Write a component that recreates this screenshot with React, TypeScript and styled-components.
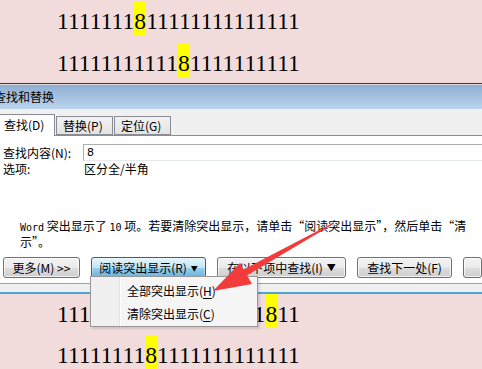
import React from 'react';
import styled, { createGlobalStyle } from 'styled-components';

const Global = createGlobalStyle`
  html, body { margin: 0; padding: 0; }
  body { width: 482px; height: 369px; overflow: hidden; background: #f2dcdb; }
`;

const Screen = styled.div`
  position: relative;
  width: 482px;
  height: 369px;
  overflow: hidden;
  display: flex;
  flex-direction: column;
  background: #f2dcdb;
`;

const DocArea = styled.div<{ $top: number; $gap: number; $height: number }>`
  flex: none;
  height: ${(p) => p.$height}px;
  box-sizing: border-box;
  padding: ${(p) => p.$top}px 0 0 57px;
  display: flex;
  flex-direction: column;
  gap: ${(p) => p.$gap}px;
  background: #f2dcdb;
`;

const DocLine = styled.div`
  display: flex;
  height: 34px;
  font-family: "Liberation Serif", "Times New Roman", serif;
  font-size: 23.6px;
  color: #000;
`;

const Digits = styled.span<{ $mark?: boolean }>`
  display: inline-block;
  height: 34px;
  line-height: 41px;
  white-space: pre;
  background: ${(p) => (p.$mark ? '#ffff00' : 'transparent')};
`;

const Divider = styled.div`
  flex: none;
  height: 1px;
  background: #3a3a3a;
  border-bottom: 1px solid #d9dde3;
`;

const Dialog = styled.div`
  flex: none;
  display: flex;
  flex-direction: column;
  font-family: "Noto Sans CJK SC", "Noto Sans", sans-serif;
  font-size: 12px;
  color: #000;
`;

const TitleBar = styled.div`
  height: 24px;
  display: flex;
  align-items: center;
  background: linear-gradient(#8fafd2, #bad4ee);
  overflow: hidden;
`;

const TitleText = styled.span`
  margin-left: -6px;
  line-height: 14px;
`;

const TabStrip = styled.div`
  height: 27px;
  box-sizing: border-box;
  display: flex;
  align-items: flex-end;
  background: #f0f0f0;
  box-shadow: inset 0 -1px #898c95;
`;

const Tab = styled.div<{ $active?: boolean; $width: number }>`
  box-sizing: border-box;
  width: ${(p) => p.$width}px;
  height: ${(p) => (p.$active ? 22 : 19)}px;
  margin-left: ${(p) => (p.$active ? -1 : 1)}px;
  margin-bottom: ${(p) => (p.$active ? 0 : 1)}px;
  border: 1px solid #898c95;
  border-bottom: ${(p) => (p.$active ? 'none' : '1px solid #898c95')};
  background: ${(p) => (p.$active ? '#ffffff' : 'linear-gradient(#f2f2f2, #e3e3e3)')};
  display: flex;
  align-items: center;
  padding-left: ${(p) => (p.$active ? 4 : 6)}px;
  padding-bottom: ${(p) => (p.$active ? 2 : 0)}px;
  line-height: 14px;
  white-space: nowrap;
`;

const Panel = styled.div`
  height: 147px;
  box-sizing: border-box;
  background: #ffffff;
  padding: 8px 0 0 3px;
  display: flex;
  flex-direction: column;
  white-space: nowrap;
  overflow: hidden;
`;

const FieldRow = styled.div`
  display: flex;
  align-items: center;
  height: 17px;
`;

const OptionRow = styled.div`
  display: flex;
  align-items: center;
  height: 14px;
  margin-top: 1px;
`;

const Label = styled.span`
  width: 80px;
  flex: none;
  line-height: 14px;
`;

const Value = styled.span`
  line-height: 14px;
  padding-left: 1px;
`;

const Input = styled.div`
  flex: none;
  width: 420px;
  height: 17px;
  box-sizing: border-box;
  border: 1px solid #abadb3;
  border-right: none;
  border-bottom-color: #e3e9ef;
  padding-left: 3px;
  display: flex;
  align-items: center;
  font-family: "DejaVu Sans", sans-serif;
  font-size: 11px;
`;

const Message = styled.div`
  margin: 43px 0 0 17px;
  line-height: 14px;
  display: flex;
  flex-direction: column;
`;

const Latin = styled.span`
  font-family: "DejaVu Sans Mono", monospace;
  font-size: 10px;
`;

const ButtonRow = styled.div`
  margin-top: 8px;
  display: flex;
  gap: 11px;
`;

const Button = styled.div<{ $width: number; $pressed?: boolean }>`
  flex: none;
  width: ${(p) => p.$width}px;
  height: 21px;
  box-sizing: border-box;
  border: 1px solid ${(p) => (p.$pressed ? '#2c628b' : '#707070')};
  border-radius: 3px;
  background: ${(p) =>
    p.$pressed
      ? 'linear-gradient(#e5f4fc 0%, #c4e5f6 50%, #98d1ef 51%, #68b3db 100%)'
      : 'linear-gradient(#f2f2f2 0%, #ebebeb 50%, #dddddd 51%, #cfcfcf 100%)'};
  box-shadow: inset 0 0 0 1px ${(p) => (p.$pressed ? 'rgba(255,255,255,0.3)' : 'rgba(255,255,255,0.7)')};
  display: flex;
  align-items: center;
  justify-content: center;
  gap: 4px;
  line-height: 14px;
  white-space: nowrap;
  overflow: hidden;
`;

const Caret = styled.span<{ $small?: boolean }>`
  font-size: ${(p) => (p.$small ? 7 : 9)}px;
  line-height: 10px;
`;

const PanelEdge = styled.div`
  height: 1px;
  background: #a0a0a0;
`;

const Footer = styled.div`
  height: 8px;
  background: #f0f0f0;
  border-bottom: 2px solid #4fa3d6;
`;

const Menu = styled.div`
  position: absolute;
  left: 90px;
  top: 276px;
  width: 168px;
  height: 51px;
  box-sizing: border-box;
  border: 1px solid #979797;
  background: #f5f5f5;
  box-shadow: 2px 2px 2px rgba(0, 0, 0, 0.12);
  display: flex;
  font-family: "Noto Sans CJK SC", "Noto Sans", sans-serif;
  font-size: 12px;
  color: #000;
`;

const Gutter = styled.div`
  width: 28px;
  flex: none;
  background: #f0f0f0;
  border-right: 1px solid #e2e3e3;
  box-shadow: 1px 0 #ffffff;
`;

const MenuItems = styled.div`
  flex: 1;
  padding: 2px 0 0 7px;
  display: flex;
  flex-direction: column;
`;

const MenuItem = styled.div`
  height: 23px;
  display: flex;
  align-items: center;
  line-height: 14px;
  white-space: nowrap;
`;

const Key = styled.span`
  text-decoration: underline;
  text-underline-offset: 2px;
`;

const Arrow = styled.svg`
  position: absolute;
  left: 0;
  top: 0;
  pointer-events: none;
`;

function Line({ before, after }: { before: number; after: number }) {
  return (
    <DocLine>
      <Digits>{'1'.repeat(before)}</Digits>
      <Digits $mark>8</Digits>
      <Digits>{'1'.repeat(after)}</Digits>
    </DocLine>
  );
}

export default function App() {
  return (
    <>
      <Global />
      <Screen>
        <DocArea $top={1} $gap={8} $height={83}>
          <Line before={7} after={14} />
          <Line before={11} after={10} />
        </DocArea>
        <Divider />
        <Dialog>
          <TitleBar>
            <TitleText>查找和替换</TitleText>
          </TitleBar>
          <TabStrip>
            <Tab $active $width={56}>查找(D)</Tab>
            <Tab $width={57}>替换(P)</Tab>
            <Tab $width={57}>定位(G)</Tab>
          </TabStrip>
          <Panel>
            <FieldRow>
              <Label>查找内容(N):</Label>
              <Input>8</Input>
            </FieldRow>
            <OptionRow>
              <Label>选项:</Label>
              <Value>区分全/半角</Value>
            </OptionRow>
            <Message>
              <span>
                <Latin>Word</Latin> 突出显示了 <Latin>10</Latin> 项。若要清除突出显示，请单击“阅读突出显示”，然后单击“清
              </span>
              <span>示”。</span>
            </Message>
            <ButtonRow>
              <Button $width={77}>更多(M) &gt;&gt;</Button>
              <Button $width={115} $pressed>
                阅读突出显示(R)<Caret $small>▼</Caret>
              </Button>
              <Button $width={129}>
                在以下项中查找(I)<Caret>▼</Caret>
              </Button>
              <Button $width={95}>查找下一处(F)</Button>
              <Button $width={19} />
            </ButtonRow>
          </Panel>
          <PanelEdge />
          <Footer />
        </Dialog>
        <DocArea $top={0} $gap={7} $height={75}>
          <Line before={19} after={2} />
          <Line before={8} after={13} />
        </DocArea>
        <Menu>
          <Gutter />
          <MenuItems>
            <MenuItem>
              全部突出显示(<Key>H</Key>)
            </MenuItem>
            <MenuItem>
              清除突出显示(<Key>C</Key>)
            </MenuItem>
          </MenuItems>
        </Menu>
        <Arrow width="482" height="369" viewBox="0 0 482 369">
          <polygon points="246,276 334.2,223.4 333.8,222.6 242.5,270" fill="#f23b3b" />
          <polygon points="213,291 252,284 240,263" fill="#f23b3b" />
        </Arrow>
      </Screen>
    </>
  );
}
